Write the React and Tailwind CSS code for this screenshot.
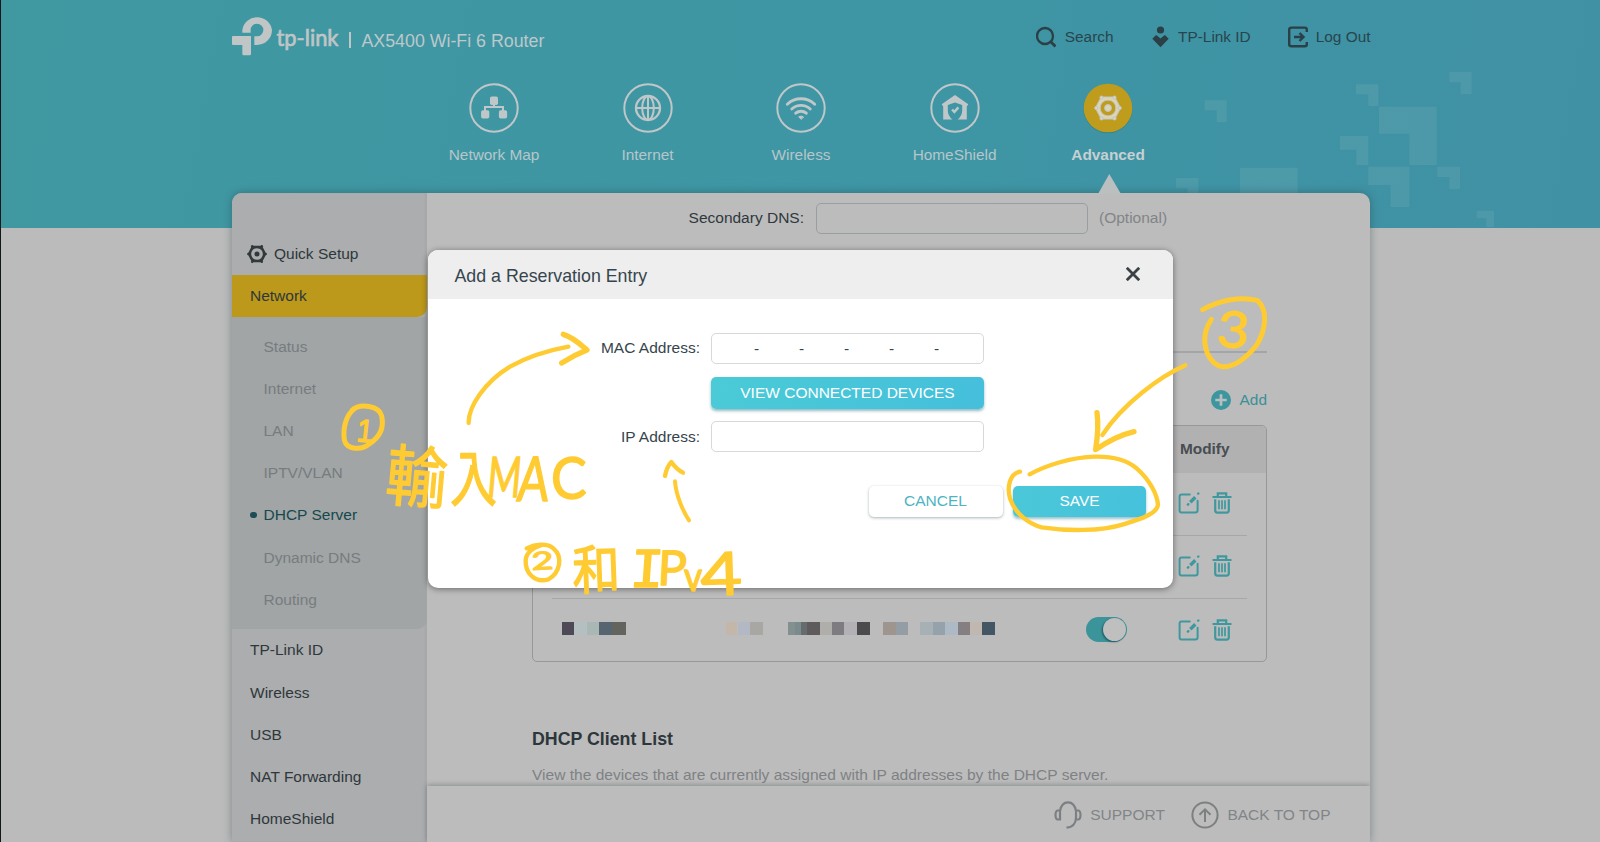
import React from "react";

const NAV = ["Network Map", "Internet", "Wireless", "HomeShield", "Advanced"];
const SUBMENU = ["Status", "Internet", "LAN", "IPTV/VLAN", "DHCP Server", "Dynamic DNS", "Routing"];
const MENU = ["TP-Link ID", "Wireless", "USB", "NAT Forwarding", "HomeShield"];

const MOSAIC = [
  [29.5, 12.5, "#4f4857"], [42, 12.5, "#b3bfc1"], [54.5, 12.5, "#a9b7b5"], [67, 13, "#566570"], [80, 13.5, "#64645f"],
  [194, 11, "#c4b7aa"], [206, 12, "#b2b9c4"], [218, 12.5, "#a8a7a3"],
  [255.5, 7, "#82918f"], [262.5, 6.5, "#7a8a8d"], [269, 5.5, "#666c6e"], [274.5, 13, "#5f5a5b"], [287.5, 12, "#b0aeaa"],
  [299.5, 12.5, "#7f7c81"], [312, 13, "#b3b1b5"], [325, 12.5, "#4b4a4c"], [351, 12.5, "#9f958f"], [363.5, 12.5, "#949da3"],
  [388, 12.5, "#a7b0b4"], [400.5, 12.5, "#95a1ab"], [413, 12.5, "#aeb9c6"], [425.5, 12.5, "#857f81"], [438, 12, "#c0b8b0"],
  [450, 13, "#445663"],
];

function Pixels() {
  return (
    <svg className="absolute inset-0" width="1600" height="228" aria-hidden="true">
      <g transform="translate(1200 60) scale(.33333)" fill="#cfd3d8" fillOpacity=".1">
        <path d="M14 121h66v66h-30v-36h-36z" />
        <path d="M468 73h67v65h-30v-35h-37z" />
        <path d="M748 36h67v67h-33v-36h-34z" />
        <path d="M537 140h173v175h-82v-94h-91z" />
        <path d="M420 228h85v87h-36v-46h-49z" />
        <path d="M505 320h123v121h-56v-66h-67z" />
        <path d="M712 320h68v67h-32v-36h-36z" />
        <path d="M830 452h52v50h-23v-27h-29z" />
        <path d="M120 323h173v80h-173z" />
        <path d="M-72 354h67v46h-32v-15h-35z" />
      </g>
    </svg>
  );
}

function NavIcon({ name }) {
  const c = "#c0c7c9";
  return (
    <svg width="50" height="50" viewBox="-25 -25 50 50" fill="none" stroke={c} className="block overflow-visible">
      {name === "Advanced" ? (
        <>
          <circle r="24.5" cy=".8" fill="#2b7385" fillOpacity=".5" stroke="none" />
          <circle r="24.3" fill="#c09c1d" stroke="none" />
        </>
      ) : (
        <circle r="23.7" strokeWidth="2" />
      )}
      {name === "Network Map" && (
        <g>
          <path d="M0-6v5.5M-9 5v-6H9v6" strokeWidth="2" />
          <g fill={c} stroke="none">
            <rect x="-4" y="-11.5" width="8" height="8.5" rx="1.8" />
            <rect x="-12.9" y="2.3" width="8.2" height="8.2" rx="1.8" />
            <rect x="4.9" y="2.3" width="8.2" height="8.2" rx="1.8" />
          </g>
        </g>
      )}
      {name === "Internet" && (
        <g strokeWidth="2.3">
          <circle r="12" />
          <ellipse rx="5.8" ry="12" strokeWidth="2" />
          <path d="M0-12V12M-12 0H12" strokeWidth="2" />
        </g>
      )}
      {name === "Wireless" && (
        <g strokeWidth="2.9" strokeLinecap="round">
          <path d="M-13.7-3.8a20 20 0 0 1 27.4 0" />
          <path d="M-9.2 1a13.5 13.5 0 0 1 18.4 0" />
          <path d="M-5.3 5.2a8 8 0 0 1 10.6 0" />
          <path d="M0 11.2l-2.3-2.4q2.3-1.6 4.6 0z" fill={c} strokeWidth="1" />
        </g>
      )}
      {name === "HomeShield" && (
        <g stroke="none">
          <path d="M0-13L13.3-3.8 11.8-1.6V11.5H2.6Q7.2 7.8 7.2 2.5V-3L0-5.6-7.2-3V2.5Q-7.2 7.8-2.6 11.5H-11.8V-1.6L-13.3-3.8Z" fill={c} />
          <path d="M-3 1.5l2.4 2.4L3.4-.6" stroke={c} strokeWidth="2.4" />
        </g>
      )}
      {name === "Advanced" && <Gear color="#ddd4b4" />}
    </svg>
  );
}

function Gear({ color }) {
  return (
    <g fill={color}>
      <path fillRule="evenodd" d="M-6.8-11H6.8L12.6 0 6.8 11H-6.8L-12.6 0ZM-7.9 0A7.9 7.9 0 1 0 7.9 0A7.9 7.9 0 1 0-7.9 0Z" />
      <circle r="3.4" />
      <circle cx="-6.5" cy="-10.4" r="1.6" /><circle cx="6.5" cy="-10.4" r="1.6" />
      <circle cx="-6.5" cy="10.4" r="1.6" /><circle cx="6.5" cy="10.4" r="1.6" />
      <circle cx="-11.7" r="1.6" /><circle cx="11.7" r="1.6" />
    </g>
  );
}

function EditIcon() {
  return (
    <svg width="22" height="22" viewBox="0 0 22 22" fill="none" stroke="#3f989e" strokeWidth="2" strokeLinecap="round">
      <path d="M11.8 2.4H3.5Q1.6 2.4 1.6 4.3V18.4Q1.6 20.4 3.5 20.4H17.3Q19.6 20.4 19.6 18.4V8.8" />
      <path d="M12.3 10.2L17.3 5.3" strokeWidth="3.4" strokeLinecap="butt" />
      <path d="M9.9 12.6l.4-.4M20.2 1.6l.1-.1" strokeWidth="2.4" />
    </svg>
  );
}

function TrashIcon() {
  return (
    <svg width="20" height="22" viewBox="0 0 20 22" fill="none" stroke="#3f989e" strokeWidth="2.2">
      <path d="M.5 5H19.5M5.8 5V1.4H14.2V5" />
      <path d="M3.2 7.3V18.3Q3.2 20.6 5.3 20.6H14.7Q16.8 20.6 16.8 18.3V7.3" />
      <path d="M7 8.2v9M10 8.2v9M13 8.2v9" strokeWidth="1.7" />
    </svg>
  );
}

function Row({ last }) {
  return (
    <div className={`mx-[19px] flex h-[63px] items-center pb-px ${last ? "" : "border-b border-[#a5a7a8]"}`}>
      <div className="ml-auto flex items-center pr-[15px]">
        {last && (
          <div className="mr-[51px] flex h-[25px] w-[41px] items-center justify-end rounded-full bg-[#3c949b] pr-px">
            <div className="h-[23px] w-[23px] rounded-full bg-[#bfbfbf] shadow-[-1px_1px_2px_rgba(0,40,50,.55)]" />
          </div>
        )}
        <EditIcon />
        <span className="w-[12px]" />
        <TrashIcon />
      </div>
    </div>
  );
}

function Header() {
  return (
    <header className="relative h-[228px] bg-[linear-gradient(100deg,#4098a1_0%,#3e95a4_60%,#4091a4_100%)]">
      <Pixels />
      <div className="relative ml-[232px] flex h-[76px] w-[1138.5px] items-center">
        <svg width="112" height="76" viewBox="0 0 112 76" className="mr-4.5 shrink-0" fill="#c0c5c6">
          <g transform="translate(-22 0) scale(.33333)">
            <path d="M97 98V90A45 45 0 0 1 186 90A45 45 0 0 1 141 135H133V109H141A19 19 0 1 0 122 90V98Z" />
            <path d="M69 108H123V162Q123 166 119 166H101Q97 166 97 162V135H69Q66 135 66 132V111Q66 108 69 108Z" />
          </g>
          <text x="44.5" y="45.5" fontFamily="Lato" fontSize="23" stroke="#c0c5c6" strokeWidth=".7" textLength="62" lengthAdjust="spacingAndGlyphs">tp-link</text>
        </svg>
        <div className="mt-1 -ml-[13px] h-[16px] w-[1.5px] bg-[#c0c7c9]" />
        <div className="mt-[6px] ml-[11px] text-[17.8px] text-[#bdc8cb] whitespace-nowrap">AX5400 Wi-Fi 6 Router</div>
        <div className="mb-[2px] ml-auto flex items-center text-[15.4px] text-[#28454d] whitespace-nowrap">
          <svg width="20" height="22" viewBox="0 0 20 22" fill="none" stroke="#2b3f46" strokeWidth="2.3"><circle cx="9" cy="10" r="8" /><path d="M14.5 15.5L19.5 20.5" strokeWidth="2.8" /></svg>
          <span className="ml-[8.5px]">Search</span>
          <svg width="17" height="22" viewBox="0 0 17 22" fill="#2b3f46" className="ml-[38px]"><circle cx="8.5" cy="4" r="3.6" /><path d="M.3 12.8L3.8 9.3H4.6L8.5 12.6 12.4 9.3H13.2L16.7 12.8 8.5 21.3Z" /></svg>
          <span className="ml-[9.5px]">TP-Link ID</span>
          <svg width="20" height="22" viewBox="0 0 20 22" fill="none" stroke="#2b3f46" strokeWidth="2.4" className="ml-[37px]"><path d="M18.8 6V3.5Q18.8 1.6 16.8 1.6H3.4Q1.2 1.6 1.2 3.6V18.2Q1.2 20.2 3.4 20.2H16.8Q18.8 20.2 18.8 18.2V16" /><path d="M6 11H15M11.5 7L15.5 11 11.5 15" /></svg>
          <span className="ml-[8px]">Log Out</span>
        </div>
      </div>
      <nav className="relative ml-[417.3px] flex pt-[7px]">
        {NAV.map((n) => (
          <div key={n} className="flex w-[153.5px] flex-col items-center">
            <NavIcon name={n} />
            <span className={`mt-[10px] text-[15.4px] ${n === "Advanced" ? "font-bold text-[#c6d0d2]" : "text-[#b6c6ca]"}`}>{n}</span>
          </div>
        ))}
      </nav>
    </header>
  );
}

function Sidebar() {
  return (
    <aside className="w-[195px] shrink-0 bg-[#abadaf] pt-[39.5px] text-[15.5px] text-[#2f373a] shadow-[inset_-2px_0_2px_rgba(0,0,0,.03)]">
      <div className="flex h-[42.2px] items-center pl-[14.5px]">
        <svg width="20" height="20" viewBox="-13.5 -13.5 27 27"><Gear color="#33393b" /></svg>
        <span className="ml-[7.5px]">Quick Setup</span>
      </div>
      <div className="flex h-[42px] items-center rounded-br-[10px] bg-[#bc981b] pl-[18px]">Network</div>
      <div className="relative z-0 -mt-[10px]">
        <div className="rounded-br-[10px] pt-[18.5px] pb-[8.5px]">
          {SUBMENU.map((s) => (
            <div key={s} className={`flex h-[42.2px] items-center pl-[18px] ${s === "DHCP Server" ? "text-[#17484c]" : "text-[#777c7e]"}`}>
              <span className={`mr-[7px] h-[6.5px] w-[6.5px] rounded-full ${s === "DHCP Server" ? "bg-[#1d4c55]" : ""}`} />
              {s}
            </div>
          ))}
        </div>
        <div className="absolute inset-x-0 top-[10px] bottom-0 -z-10 rounded-br-[10px] bg-[#a1a5a6]" />
      </div>
      {MENU.map((s) => (
        <div key={s} className="flex h-[42.2px] items-center pl-[18px]">{s}</div>
      ))}
    </aside>
  );
}

function Content() {
  return (
    <main className="flex min-w-0 flex-1 flex-col">
      <div className="min-h-0 flex-1 overflow-hidden">
        <div className="flex items-center pt-[9.5px] text-[15.5px]">
          <div className="w-[377px] text-right text-[#2f383c]">Secondary DNS:</div>
          <div className="ml-[12px] h-[31px] w-[272px] rounded-[5px] border border-[#999ea0]" />
          <div className="ml-[11px] text-[#818587]">(Optional)</div>
        </div>
        <div className="ml-[105px] h-[119px] w-[735px] border-b-2 border-[#a3a5a6]" />
        <div className="ml-[105px] flex h-[72px] w-[735px] items-center justify-end pt-[23px] text-[15.4px] text-[#3b8f97]">
          <svg width="20" height="20" viewBox="-10 -10 20 20" className="mr-[9px]"><circle r="10" fill="#3c969d" /><path d="M-5.7 0H5.7M0-5.7V5.7" stroke="#b9bfc0" strokeWidth="2.7" /></svg>
          <span>Add</span>
        </div>
        <div className="relative ml-[105px] h-[237px] w-[735px] rounded-[5px] border border-[#95999b]">
          <div className="flex h-[47px] items-center justify-end rounded-t-[4px] bg-[#b1b1b1] pr-[36.5px] text-[15.4px] font-bold text-[#474d52]">Modify</div>
          <Row />
          <Row />
          <Row last />
          <div className="absolute top-[196.5px] left-0">
            {MOSAIC.map(([x, w, c]) => (
              <span key={x} className="absolute h-[13px]" style={{ left: x - 1, width: w, backgroundColor: c }} />
            ))}
          </div>
        </div>
        <div className="ml-[105px] pt-[66px] text-[17.8px] leading-[22px] font-bold text-[#2d363a]">DHCP Client List</div>
        <div className="ml-[105px] pt-[14px] text-[15.55px] leading-[22px] whitespace-nowrap text-[#7e8284]">
          View the devices that are currently assigned with IP addresses by the DHCP server.
        </div>
      </div>
      <footer className="relative flex h-[56px] shrink-0 items-center justify-end bg-[#bcbcbc] pt-[2px] pr-[39.5px] text-[15.5px] text-[#818587] shadow-[0_-1px_5px_rgba(60,70,75,.4)]">
        <svg width="28" height="28" viewBox="0 0 28 28" fill="none" stroke="#7c8082" strokeWidth="2.2"><path d="M6 18.5H4Q1.5 18.5 1.5 14T4 9.5H6ZM22 9.5H24Q26.5 9.5 26.5 14T24 18.5H22ZM6 10Q7.5 1.3 14 1.3T22 10V17Q21.5 26 12.5 26.7" /></svg>
        <span className="ml-[8.5px]">SUPPORT</span>
        <svg width="28" height="28" viewBox="-14 -14 28 28" fill="none" stroke="#7c8082" strokeWidth="2" className="ml-[26px]"><circle r="12.6" /><path d="M0 7V-5.5M-5.5-.2L0-5.7 5.5-.2" /></svg>
        <span className="ml-[8.5px]">BACK TO TOP</span>
      </footer>
    </main>
  );
}

function Dialog() {
  return (
    <div className="absolute top-[250px] left-[428px] h-[337.5px] w-[745px] overflow-visible rounded-[10px] bg-white text-[15.5px] text-[#36454d] shadow-[0_1px_6px_rgba(0,0,0,.45)]">
      <div className="flex h-[49px] items-center rounded-t-[10px] bg-[#eeeeee] pr-[33.5px] pl-[26.5px]">
        <span className="mt-[3px] text-[17.8px]">Add a Reservation Entry</span>
        <svg width="14" height="14" viewBox="0 0 14 14" stroke="#3a4246" strokeWidth="2.8" className="mb-[2px] ml-auto"><path d="M.8.8L13.2 13.2M13.2.8L.8 13.2" /></svg>
      </div>
      <div className="flex items-center pt-[34px]">
        <div className="mb-px w-[272px] text-right">MAC Address:</div>
        <div className="ml-[11px] flex h-[31px] w-[273px] items-center rounded-[5px] border border-[#d8d8d8] pl-[22px] text-[#36454d]">
          {[0, 1, 2, 3, 4].map((i) => (
            <span key={i} className="w-[45px] text-center">-</span>
          ))}
        </div>
      </div>
      <div className="mt-[13px] ml-[283px] flex h-[31.5px] w-[273px] items-center justify-center rounded-[5px] bg-[linear-gradient(100deg,#4acbd6,#45bfdc)] text-white shadow-[0_2px_3px_rgba(40,120,140,.5)]">
        VIEW CONNECTED DEVICES
      </div>
      <div className="mt-[12.5px] flex items-center">
        <div className="w-[272px] text-right">IP Address:</div>
        <div className="ml-[11px] h-[31px] w-[273px] rounded-[5px] border border-[#d8d8d8]" />
      </div>
      <div className="mt-[34px] ml-[440.5px] flex gap-[10.5px]">
        <div className="flex h-[31px] w-[134px] items-center justify-center rounded-[5px] bg-white pb-px text-[#4db4c4] shadow-[0_1px_3px_rgba(60,90,100,.45)]">CANCEL</div>
        <div className="flex h-[31px] w-[133px] items-center justify-center rounded-[5px] bg-[linear-gradient(100deg,#4ac8d8,#46c1dc)] pb-px text-white shadow-[0_2px_3px_rgba(40,120,140,.45)]">SAVE</div>
      </div>
    </div>
  );
}

/* Pen marks laid over the screen: circles and arrows as strokes, notes as text. */
function Annotations() {
  return (
    <svg className="absolute inset-0" width="1600" height="842" fill="none" stroke="#ffcb32" strokeLinecap="round" strokeLinejoin="round">
      <g transform="translate(220 230) scale(.33333)" strokeWidth="15">
        <path d="M405 535C378 555 368 592 373 630C380 660 425 662 450 640C485 617 492 590 485 558C478 528 420 518 396 541" />
        <path d="M746 579C745 530 795 455 870 410C920 382 980 362 1045 350" strokeWidth="13" />
        <path d="M1030 313C1060 322 1080 342 1101 360C1075 370 1050 383 1025 399" strokeWidth="16" />
      </g>
      <g transform="translate(500 440) scale(.33333)">
        <path d="M80 325C105 313 140 308 160 325C190 350 180 400 145 418C105 430 75 400 77 360C79 338 100 322 122 316" strokeWidth="13" />
        <path d="M567 241C548 212 528 165 525 124" strokeWidth="12" />
        <path d="M495 108C499 88 506 74 514 66C524 80 533 90 549 98" strokeWidth="13" />
      </g>
      <g transform="translate(980 280) scale(.33333)" strokeWidth="15">
        <path d="M668 89C715 62 780 48 832 61C865 90 858 150 830 195C795 240 750 270 715 257C675 235 665 180 683 138L694 118" />
        <path d="M616 256C540 290 430 370 367 465" strokeWidth="13" />
        <path d="M351 398C356 432 352 475 347 509C385 483 420 465 462 455" strokeWidth="16" />
        <path d="M120 575C90 580 80 620 90 655C105 700 145 732 185 742C260 753 360 755 430 733C490 715 530 700 534 675C532 645 510 600 470 565C440 540 395 529 345 530C275 532 200 555 149 583" strokeWidth="13" />
      </g>
      <g fill="#ffcb32" stroke="#ffcb32" strokeWidth="1.4" fontFamily="'Noto Sans CJK TC', sans-serif" fontWeight="400">
        <text transform="translate(356 441) rotate(6) scale(.9 1)" fontSize="32" fontFamily="'Liberation Sans', sans-serif">1</text>
        <text transform="translate(532 570) rotate(-3) scale(1.3 .85)" fontSize="29" fontFamily="Lato, sans-serif">2</text>
        <text transform="translate(1216 346) rotate(5) scale(1.1 1)" fontSize="50" fontFamily="Lato, sans-serif">3</text>
        <text transform="translate(384 499) rotate(5) scale(.92 1)" fontSize="67">輸</text>
        <text transform="translate(450 501) scale(.78 1)" fontSize="60">入</text>
        <text transform="translate(486 497) skewX(-5) scale(.65 1)" fontSize="56" fontFamily="Lato, sans-serif">M</text>
        <text transform="translate(516 501) skewX(-5) scale(.75 1)" fontSize="62" fontFamily="Lato, sans-serif">A</text>
        <text transform="translate(551 499) scale(.92 1)" fontSize="58" fontFamily="Lato, sans-serif">C</text>
        <text transform="translate(573 590) rotate(-2) scale(.9 1)" fontSize="53">和</text>
        <text transform="translate(629 587) skewX(-4) scale(1.1 1)" fontSize="51" fontFamily="'DejaVu Sans Mono', monospace">I</text>
        <text transform="translate(657 585) skewX(-3)" fontSize="48" fontFamily="Lato, sans-serif">P</text>
        <text transform="translate(684 591) scale(.88 1)" fontSize="40" fontFamily="Lato, sans-serif">v</text>
        <text transform="translate(701 596) rotate(-2) scale(1.2 1)" fontSize="60" fontFamily="Lato, sans-serif">4</text>
      </g>
    </svg>
  );
}

export default function App() {
  return (
    <div className="relative h-[842px] w-[1600px] overflow-hidden bg-[#bbbbbb] font-['Liberation_Sans',Arial,sans-serif]">
      <Header />
      <div className="relative z-0 -mt-[35px] ml-[232px] flex h-[649px] w-[1138px] rounded-t-[10px] bg-[#bcbcbc] shadow-[0_0_9px_rgba(30,55,65,.4)]">
        <div className="flex min-w-0 flex-1 overflow-hidden rounded-t-[10px]">
          <Sidebar />
          <Content />
        </div>
        <svg className="absolute -top-[19px] left-[866px]" width="23" height="20" fill="#bcbfbf"><path d="M11.3 0L23 20H0Z" /></svg>
      </div>
      <Dialog />
      <Annotations />
      <div className="absolute inset-y-0 left-0 w-px bg-[#101818]" />
    </div>
  );
}
